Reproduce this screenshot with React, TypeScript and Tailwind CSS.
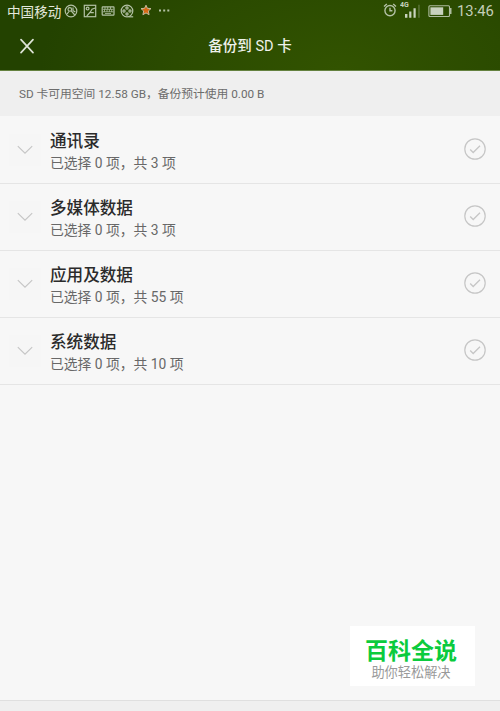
import type { ReactNode } from "react";

const groups = [
  { title: "通讯录", total: 3 },
  { title: "多媒体数据", total: 3 },
  { title: "应用及数据", total: 55 },
  { title: "系统数据", total: 10 },
];

function StatusIcon({ className = "", children }: { className?: string; children: ReactNode }) {
  return (
    <svg
      viewBox="0 0 14 14"
      className={`h-3.5 w-3.5 shrink-0 ${className}`}
      fill="none"
      stroke="#b3c1a5"
      strokeWidth="1.2"
    >
      {children}
    </svg>
  );
}

function StatusBar() {
  return (
    <div className="flex h-[22px] items-center pl-[7px] pr-[6px]">
      <div className="mt-px w-[57px] whitespace-nowrap text-[13.6px] leading-5 text-[#e2e8db]">中国移动</div>
      <div className="-mt-px flex items-center gap-[4.7px]">
        <StatusIcon>
          <circle cx="7" cy="7" r="5.8" />
          <circle cx="5.8" cy="5.4" r="1.8" />
          <path d="M3 10.2 5 7.5M7.2 6.8l3.6 4.2M9 3.5v3.2l2.3 1.2" />
        </StatusIcon>
        <StatusIcon>
          <rect x="1.3" y="1.3" width="11.4" height="11.4" />
          <circle cx="4.6" cy="4.6" r="1.4" />
          <path d="M12.3 4 9 5.2 7.4 8 3.8 12M7.4 8.7h3.4" />
        </StatusIcon>
        <StatusIcon>
          <rect x="1.2" y="2.8" width="11.8" height="8.4" rx="0.6" />
          <path d="M2 5.3h10.4M2 7.8h10.4M4 3v2.3M6.7 3v2.3M9.5 3v2.3M3.5 5.3v2.5M6 5.3v2.5M8.4 5.3v2.5M10.7 5.3v2.5M4 9.5h6" strokeWidth="0.8" />
        </StatusIcon>
        <StatusIcon>
          <circle cx="7" cy="7" r="5.8" />
          <circle cx="7" cy="4" r="1.1" />
          <circle cx="4" cy="7" r="1.1" />
          <circle cx="10" cy="7" r="1.1" />
          <circle cx="7" cy="10" r="1.1" />
          <path d="M8.5 12.8h4.7" />
        </StatusIcon>
        <StatusIcon>
          <path
            d="m7 1.2 1.4 3.1 3.6.3L9.3 7l.8 3.7L7 8.9l-3.1 1.8.8-3.7L2 4.6l3.6-.3z"
            fill="#d96813"
            stroke="#c4bb9f"
            strokeWidth="1"
          />
        </StatusIcon>
        <StatusIcon>
          <path d="M2 6.5h2M6.2 6.5h2M10.3 6.5h2" strokeWidth="1.9" />
        </StatusIcon>
      </div>

      <div className="ml-auto flex items-center">
        <StatusIcon className="-mt-[2px] mr-[3px]">
          <circle cx="7" cy="7.6" r="5.1" strokeWidth="1.4" />
          <path d="M7 4.8v3h2.4M1 3.6l2.8-2.5M13 3.6l-2.8-2.5" strokeWidth="1.4" />
        </StatusIcon>
        <svg viewBox="0 0 21 18" className="-mt-[2px] h-[18px] w-[21px]" fill="#c8d2be">
          <text x="0" y="6" fontSize="7" fontWeight="700" fontFamily="Roboto, sans-serif">
            4G
          </text>
          <path d="M5 13h2.4v3.8H5zM9.2 10.4h2.2v6.4H9.2zM13.5 7.2h2.2v9.6h-2.2z" />
          <path d="M18.2 3.8h1.5v13h-1.5z" opacity="0.3" />
        </svg>
        <svg viewBox="0 0 24 12" className="-mt-px ml-[7px] h-3 w-6" fill="none">
          <rect x="0.9" y="0.7" width="20.6" height="10.8" rx="1" stroke="#aebc9f" strokeWidth="1.1" />
          <path d="M22.7 3v6" stroke="#aebc9f" strokeWidth="1.6" />
          <path d="M2.4 2.3h12.8v7.6H2.4z" fill="#c8d2be" />
        </svg>
        <div className="ml-[5px] w-[37px] whitespace-nowrap text-[14.8px] leading-5 text-[#c3ceb8]">13:46</div>
      </div>
    </div>
  );
}

function Header() {
  return (
    <header className="h-[71px] border-b border-[#64813f] bg-[radial-gradient(ellipse_300px_150px_at_340px_68px,#325300_0%,#2b4b00_55%,#234200_100%)]">
      <StatusBar />
      <div className="grid h-12 grid-cols-[1fr_auto_1fr] items-center">
        <svg viewBox="0 0 16 16" className="ml-[19px] h-4 w-4" stroke="#dde3d5" strokeWidth="1.7" strokeLinecap="round">
          <path d="m2 1.6 12 13M14 1.6l-12 13" />
        </svg>
        <h1 className="mt-[2px] text-[14.5px] font-medium leading-5 text-[#eff2eb]">
          备份到 <span className="font-normal">SD</span> 卡
        </h1>
      </div>
    </header>
  );
}

function GroupRow({ title, total }: { title: string; total: number }) {
  return (
    <li className="flex h-[67px] items-center border-b border-[#e5e5e5] pl-[9px] pr-3.5">
      <div className="flex h-8 w-8 items-center justify-center bg-[#f6f6f6]">
        <svg viewBox="0 0 16 10" className="h-2.5 w-4" fill="none" stroke="#c5c5c5" strokeWidth="1.1">
          <path d="m.8 1.2 7.2 7 7.2-7" />
        </svg>
      </div>
      <div className="ml-[9px] flex-1 pt-px">
        <div className="pt-px text-[16.6px] font-medium leading-[23px] text-[#2b2b2b]">{title}</div>
        <div className="text-[13.8px] leading-5 text-[#686868]">已选择 0 项，共 {total} 项</div>
      </div>
      <svg viewBox="0 0 22 22" className="-mt-[2px] h-[22px] w-[22px]" fill="none" stroke="#c6c6c6">
        <circle cx="11" cy="11" r="10.2" strokeWidth="1.2" />
        <path d="m6.2 11.5 3 3L16 7.8" strokeWidth="1.3" />
      </svg>
    </li>
  );
}

export default function App() {
  return (
    <div className="relative flex h-[711px] w-[500px] flex-col overflow-hidden bg-[#f7f7f7] font-[Roboto,'Noto_Sans_CJK_SC',sans-serif]">
      <Header />
      <div className="flex h-[45px] items-center bg-[#efefef] pl-[19px] pt-[2px] text-[11.75px] text-[#6c6c6c]">
        SD 卡可用空间 12.58 GB，备份预计使用 0.00 B
      </div>
      <ul className="pt-px">
        {groups.map((g) => (
          <GroupRow key={g.title} title={g.title} total={g.total} />
        ))}
      </ul>
      <div className="mt-auto h-[11px] border-t border-[#dfdfdf] bg-[#efefef]" />

      <div className="absolute left-[350px] top-[626px] flex h-[60px] w-[125px] flex-col items-center bg-white pr-[3px] pt-[13px]">
        <div className="text-[23px] font-bold leading-[26px] text-[#0bcb3d]">百科全说</div>
        <div className="text-[13.2px] leading-4 text-[#999]">助你轻松解决</div>
      </div>
    </div>
  );
}
